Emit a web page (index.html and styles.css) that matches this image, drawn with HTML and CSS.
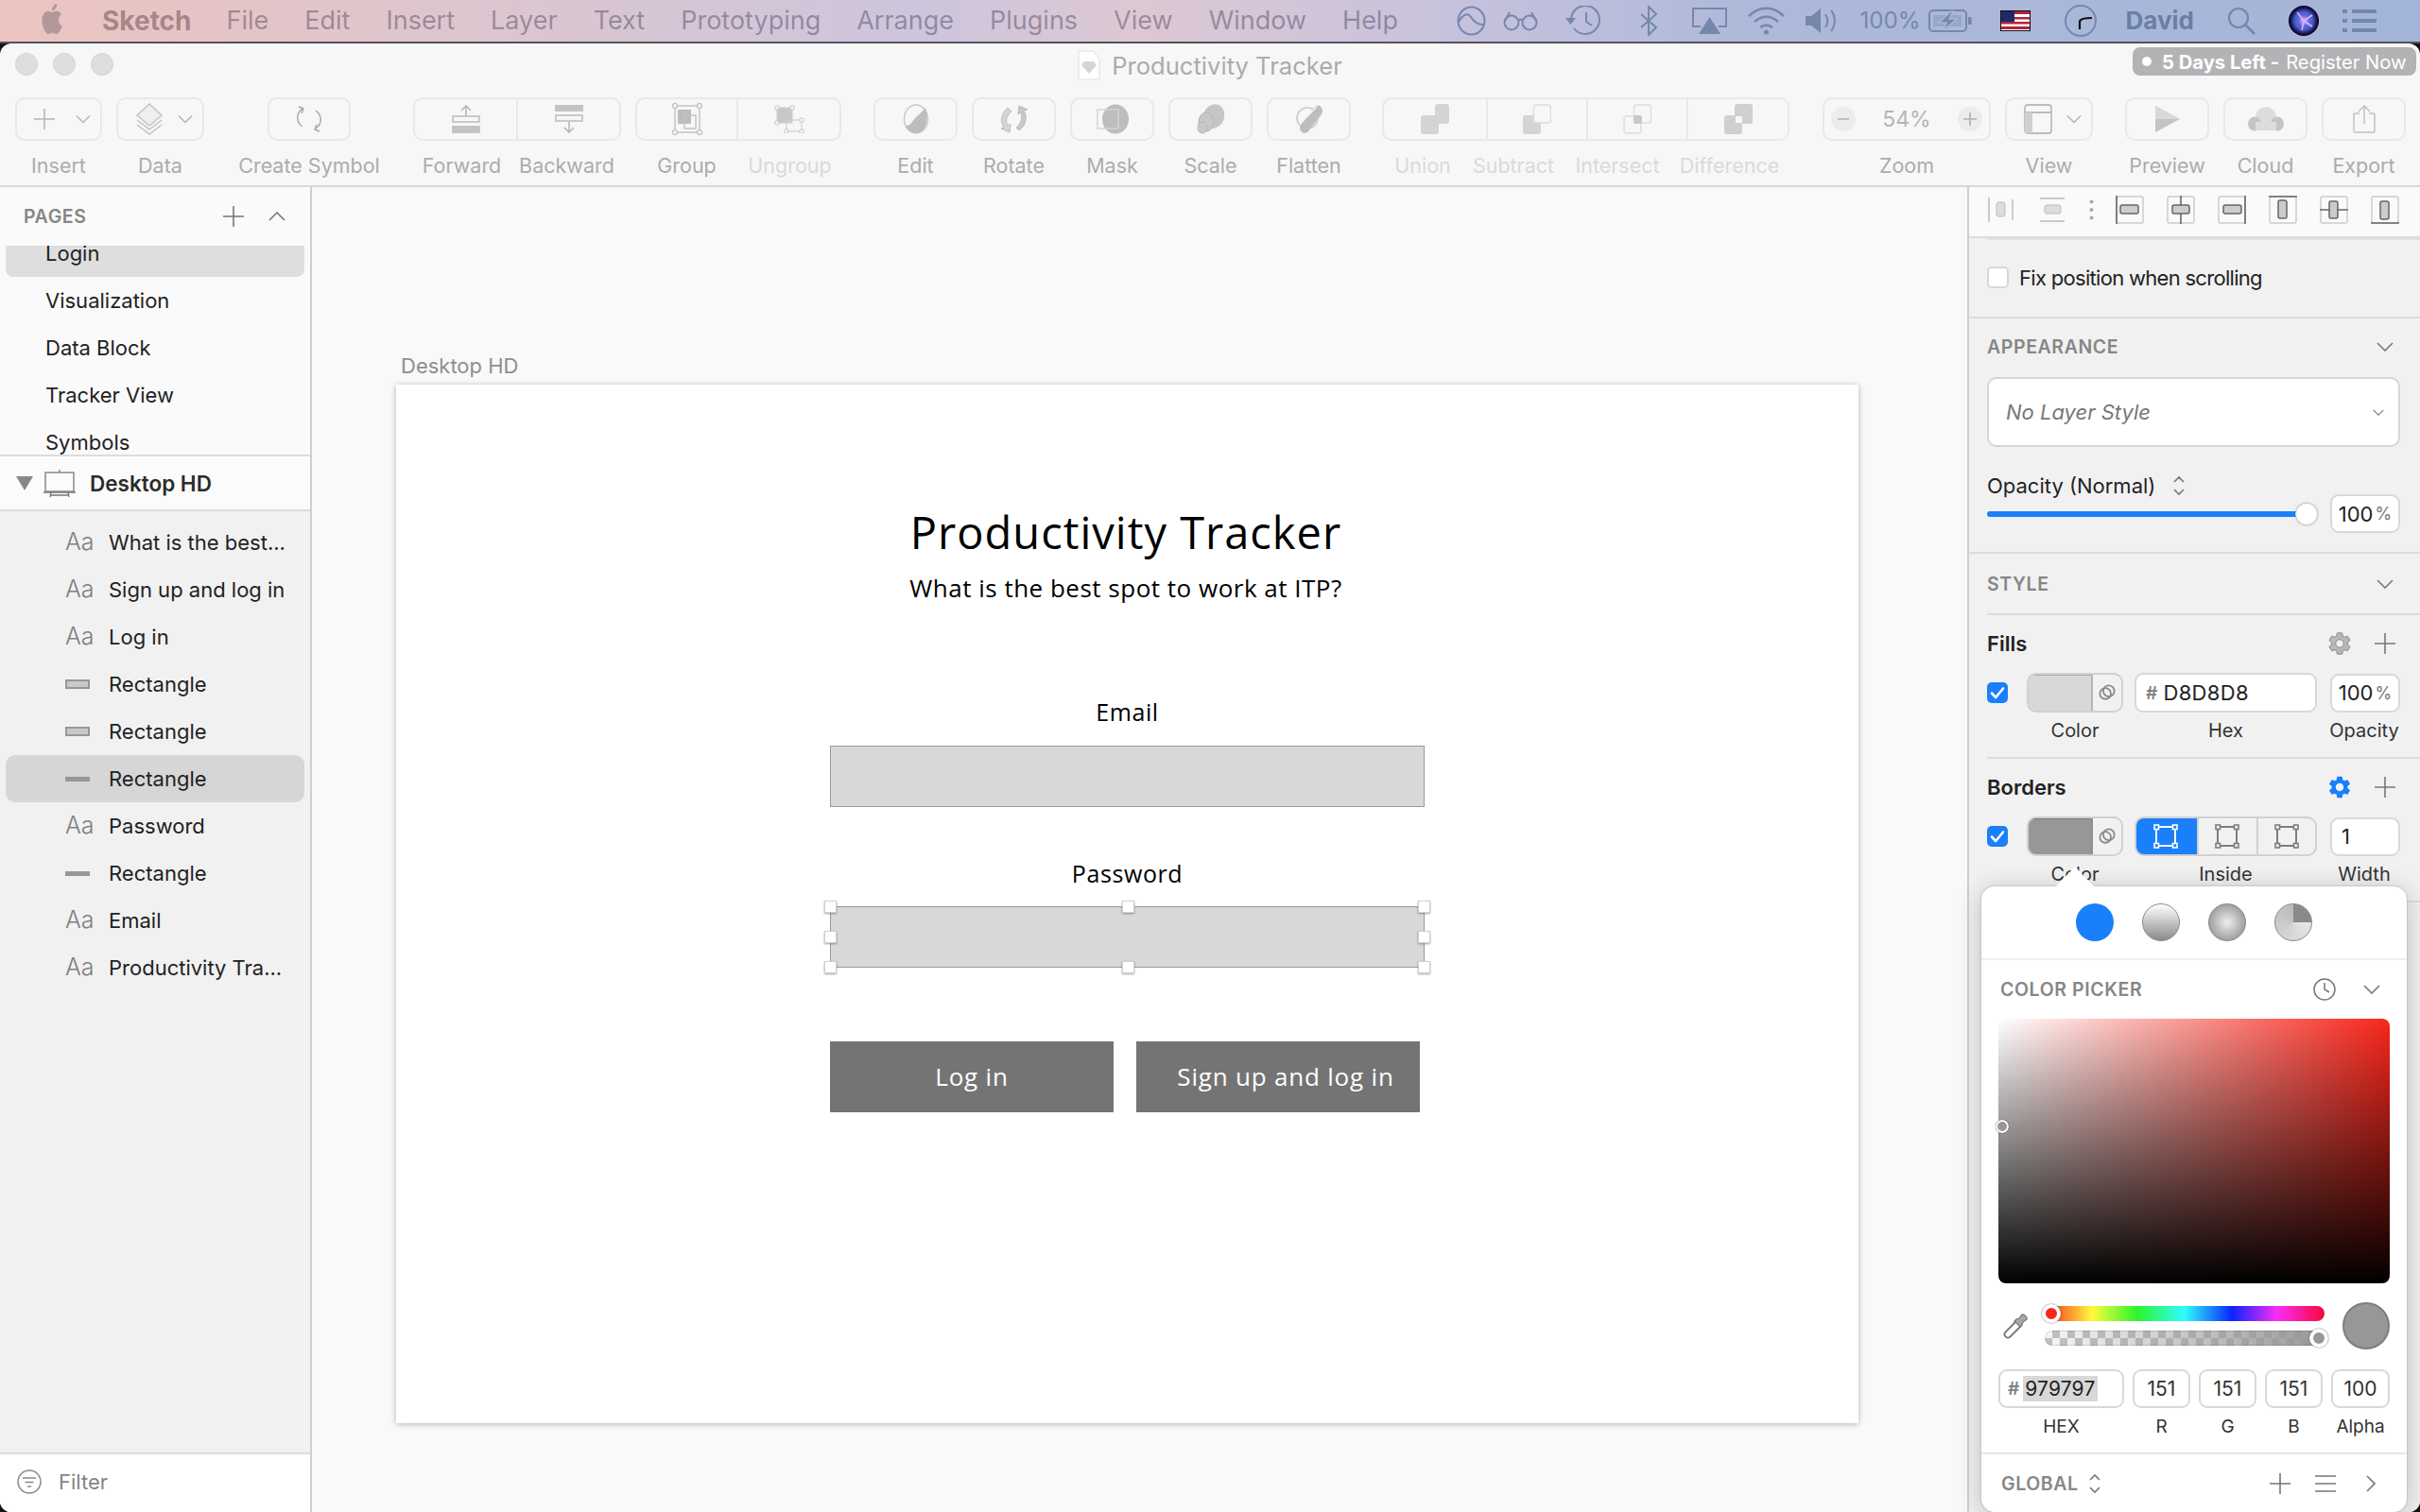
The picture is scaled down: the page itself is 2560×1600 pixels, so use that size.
FILE: index.html
```html
<!DOCTYPE html>
<html lang="en">
<head>
<meta charset="utf-8">
<title>Productivity Tracker</title>
<link rel="stylesheet" href="styles.css">
</head>
<body>
<svg class="defs" width="0" height="0" aria-hidden="true">
  <symbol id="plus" viewBox="0 0 22 22"><path d="M11 0v22M0 11h22" fill="none" stroke="currentColor" stroke-width="1.6"/></symbol>
  <symbol id="chev" viewBox="0 0 18 10"><path d="M1 1l8 8 8-8" fill="none" stroke="currentColor" stroke-width="1.6"/></symbol>
  <symbol id="gear" viewBox="0 0 24 24"><path d="M19.14 12.94c.04-.3.06-.61.06-.94 0-.32-.02-.64-.07-.94l2.03-1.58c.18-.14.23-.41.12-.61l-1.92-3.32c-.12-.22-.37-.29-.59-.22l-2.39.96c-.5-.38-1.03-.7-1.62-.94l-.36-2.54c-.04-.24-.24-.41-.48-.41h-3.84c-.24 0-.43.17-.47.41l-.36 2.54c-.59.24-1.13.57-1.62.94l-2.39-.96c-.22-.08-.47 0-.59.22L2.74 8.87c-.12.21-.08.47.12.61l2.03 1.58c-.05.3-.09.63-.09.94s.02.64.07.94l-2.03 1.58c-.18.14-.23.41-.12.61l1.92 3.32c.12.22.37.29.59.22l2.39-.96c.5.38 1.03.7 1.62.94l.36 2.54c.05.24.24.41.48.41h3.84c.24 0 .44-.17.47-.41l.36-2.54c.59-.24 1.13-.56 1.62-.94l2.39.96c.22.08.47 0 .59-.22l1.92-3.32c.12-.22.07-.47-.12-.61l-2.01-1.58zM12 15.6c-1.98 0-3.6-1.62-3.6-3.6s1.62-3.6 3.6-3.6 3.6 1.62 3.6 3.6-1.62 3.6-3.6 3.6z"/></symbol>
  <symbol id="link" viewBox="0 0 20 20"><g fill="none" stroke="#8a8a8a" stroke-width="2"><circle cx="8" cy="11" r="6.5"/><circle cx="12" cy="8" r="6.5"/></g></symbol>
  <symbol id="check" viewBox="0 0 22 22"><path d="M5 11.5l4.2 4.5L17 6.5" fill="none" stroke="#fff" stroke-width="2.6" stroke-linecap="round" stroke-linejoin="round"/></symbol>
  <symbol id="stepper" viewBox="0 0 14 22"><path d="M2 7l5-5 5 5M2 15l5 5 5-5" fill="none" stroke="#777" stroke-width="1.6"/></symbol>
  <symbol id="corners" viewBox="0 0 26 26"><path d="M3 3h20v20H3z" fill="none" stroke="currentColor" stroke-width="2"/><g fill="var(--h,#f1f1f1)" stroke="currentColor" stroke-width="1.6"><rect x="1" y="1" width="4.5" height="4.5"/><rect x="20.5" y="1" width="4.5" height="4.5"/><rect x="1" y="20.5" width="4.5" height="4.5"/><rect x="20.5" y="20.5" width="4.5" height="4.5"/></g></symbol>
</svg>

<header class="menubar">
  <svg class="apple" width="26" height="32" viewBox="0 0 24 24" preserveAspectRatio="none"><path d="M12.152 6.896c-.948 0-2.415-1.078-3.96-1.04-2.04.027-3.91 1.183-4.961 3.014-2.117 3.675-.546 9.103 1.519 12.09 1.013 1.454 2.208 3.09 3.792 3.039 1.52-.065 2.09-.987 3.935-.987 1.831 0 2.35.987 3.96.948 1.637-.026 2.676-1.48 3.676-2.948 1.156-1.688 1.636-3.325 1.662-3.415-.039-.013-3.182-1.221-3.22-4.857-.026-3.04 2.48-4.494 2.597-4.559-1.429-2.09-3.623-2.324-4.39-2.376-2-.156-3.675 1.09-4.61 1.09zM15.53 3.83c.843-1.012 1.4-2.427 1.245-3.83-1.207.052-2.662.805-3.532 1.818-.78.896-1.454 2.338-1.273 3.714 1.338.104 2.715-.688 3.559-1.701"/></svg>
  <nav class="menus">
    <span class="app">Sketch</span><span>File</span><span>Edit</span><span>Insert</span><span>Layer</span><span>Text</span><span>Prototyping</span><span>Arrange</span><span>Plugins</span><span>View</span><span>Window</span><span>Help</span>
  </nav>
  <div class="status">
    <svg width="31" height="32" viewBox="0 0 31 32"><g fill="none" stroke="currentColor" stroke-width="2"><ellipse cx="15.5" cy="16" rx="14" ry="14.5"/><path d="M2 17c4-7 8-9 11-7s6 11 16 10"/></g></svg>
    <svg class="ml-18" width="37" height="22" viewBox="0 0 37 22"><g fill="none" stroke="currentColor" stroke-width="2"><circle cx="9" cy="13" r="7.5"/><circle cx="28" cy="13" r="7.5"/><path d="M16 11c1.500-2 3.500-2 5 0M2 11L7 2M35 11L30 2"/></g></svg>
    <svg class="ml-29" width="38" height="32" viewBox="0 0 38 32"><g fill="none" stroke="currentColor" stroke-width="2"><path d="M6 15a15 15 0 1 1 3 9"/><path d="M22 7v10l6 4"/></g><path d="M0 13h11l-5.500 7z" fill="currentColor"/></svg>
    <svg class="ml-40" width="21" height="32" viewBox="0 0 21 32"><path d="M2 9l16 14-8 8V1l8 8L2 23" fill="none" stroke="currentColor" stroke-width="2"/></svg>
    <svg class="ml-35" width="37" height="28" viewBox="0 0 37 28"><path d="M9 20H1V1h35v19h-8" fill="none" stroke="currentColor" stroke-width="2"/><path d="M18.500 10L30 28H7z" fill="currentColor"/></svg>
    <svg class="ml-21" width="41" height="30" viewBox="0 0 41 30"><g fill="none" stroke="currentColor" stroke-width="2.600"><path d="M2 10c11-11 26-11 37 0M8 16c8-7 17-7 25 0M14 22c4-3 9-3 13 0"/></g><circle cx="20.500" cy="27" r="2.500" fill="currentColor"/></svg>
    <svg class="ml-21" width="32" height="26" viewBox="0 0 32 26"><path d="M0 8h6l10-8v26L6 18H0z" fill="currentColor"/><path d="M21 6c3 4 3 10 0 14M27 2c5 6 5 16 0 22" fill="none" stroke="currentColor" stroke-width="2"/></svg>
    <span class="ml-25 pct">100%</span>
    <svg class="ml-8" width="46" height="24" viewBox="0 0 46 24"><rect x="1" y="1" width="39" height="22" rx="4" fill="none" stroke="currentColor" stroke-width="2"/><path d="M42 8h3c1 0 1 8 0 8h-3z" fill="currentColor"/><path d="M5 6h30v12H5z" fill="currentColor" opacity=".35"/><path d="M24 2L11 14h8l-3 8 14-12h-8l4-8z" fill="currentColor" stroke="#a8b5d6" stroke-width="1.500"/></svg>
    <svg class="ml-30" width="32" height="22" viewBox="0 0 32 22"><rect width="32" height="22" fill="#111"/><rect x="1" y="1" width="30" height="20" fill="#fff"/><path d="M1 1h30v3H1zM1 7h30v2.500H1zM1 12h30v2.500H1zM1 17h30v3H1z" fill="#b2223a"/><rect x="1" y="1" width="14" height="11" fill="#1f2a6a"/></svg>
    <svg class="ml-36" width="34" height="34" viewBox="0 0 34 34"><circle cx="17" cy="17" r="16" fill="none" stroke="currentColor" stroke-width="2"/><path d="M16 26V18c0-2 3-4 13-4" fill="none" stroke="#111" stroke-width="2.200"/></svg>
    <span class="ml-31 user">David</span>
    <svg class="ml-35" width="30" height="30" viewBox="0 0 30 30"><circle cx="12" cy="12" r="10" fill="none" stroke="currentColor" stroke-width="2.200"/><path d="M19 19l10 10" stroke="currentColor" stroke-width="2.600"/></svg>
    <svg class="ml-35 siri" width="32" height="32" viewBox="0 0 32 32"><defs><radialGradient id="siriG"><stop offset="0" stop-color="#9fd8f0"/><stop offset=".35" stop-color="#7a5ce0"/><stop offset=".6" stop-color="#3566c0"/><stop offset=".85" stop-color="#241060"/><stop offset="1" stop-color="#020208"/></radialGradient></defs><circle cx="16" cy="16" r="16" fill="url(#siriG)"/><path d="M16 16L9 7M16 16l9-6M16 16l-2 10M16 16l9 6" stroke="#e0b0ff" stroke-width="1.600"/></svg>
    <svg class="ml-25" width="36" height="26" viewBox="0 0 36 26"><path d="M0 1h5v4H0zM10 1h26v4H10zM0 11h5v4H0zM10 11h26v4H10zM0 21h5v4H0zM10 21h26v4H10z" fill="currentColor"/></svg>
  </div>
</header>

<div class="window">
  <div class="titlebar">
    <div class="lights"><i></i><i></i><i></i></div>
    <div class="doc">
      <svg width="24" height="32" viewBox="0 0 24 32"><path d="M1 1h15l7 8v22H1z" fill="#fff" stroke="#ddd"/><path d="M7 12h10l3 4-8 9-8-9z" fill="#d5d5d5"/></svg>
      <span>Productivity Tracker</span>
    </div>
    <div class="badge"><i></i><b>5 Days Left -</b> Register Now</div>
  </div>

  <div class="toolbar">
    <div class="tool w92">
      <div class="btn between"><svg class="tb-i" width="22" height="24"><use href="#plus"/></svg><svg class="tb-c" width="16" height="10"><use href="#chev"/></svg></div>
      <span class="lbl">Insert</span>
    </div>
    <div class="tool w93">
      <div class="btn between">
        <svg width="30" height="34" viewBox="0 0 30 34"><path d="M15 1l13 12-13 11L2 13z" fill="#efefef" stroke="#c4c4c4" stroke-width="1.500"/><path d="M2 18l13 10 13-10M2 23l13 10 13-10" fill="none" stroke="#c4c4c4" stroke-width="1.500"/></svg>
        <svg class="tb-c" width="16" height="10"><use href="#chev"/></svg>
      </div>
      <span class="lbl">Data</span>
    </div>
    <div class="tool w88 gap-67">
      <div class="btn"><svg width="30" height="28" viewBox="0 0 30 28"><g fill="none" stroke="#a8a8a8" stroke-width="1.500"><path d="M8 22C1 17 1 8 8 3M4 1l5 2-2 5M22 5c7 5 7 14 0 19M26 27l-5-2 2-5"/></g></svg></div>
      <span class="lbl">Create Symbol</span>
    </div>

    <div class="seg gap-66">
      <div class="tool w111">
        <div class="btn first"><svg width="30" height="30" viewBox="0 0 30 30"><path d="M15 16V1M10 6l5-5 5 5" fill="none" stroke="#b5b5b5" stroke-width="1.500"/><rect x="1" y="12" width="28" height="6" fill="#f7f7f7" stroke="#bbb" stroke-width="1.500"/><rect x="0" y="22" width="30" height="8" rx="1" fill="#c4c4c4"/></svg></div>
        <span class="lbl sh8">Forward</span>
      </div>
      <div class="tool w109">
        <div class="btn last"><svg width="30" height="30" viewBox="0 0 30 30"><rect x="0" y="0" width="30" height="7" rx="1" fill="#c4c4c4"/><rect x="1" y="11" width="28" height="6" fill="#f7f7f7" stroke="#bbb" stroke-width="1.500"/><path d="M15 18v11M10 24l5 5 5-5" fill="none" stroke="#b5b5b5" stroke-width="1.500"/></svg></div>
        <span class="lbl sh6">Backward</span>
      </div>
    </div>
    <div class="seg">
      <div class="tool w109">
        <div class="btn first"><svg width="34" height="34" viewBox="0 0 34 34"><path d="M4 3h26v28H4z" fill="none" stroke="#c4c4c4" stroke-width="1.500"/><rect x="7" y="7" width="14" height="15" fill="#bdbdbd"/><rect x="14" y="13" width="12" height="14" fill="none" stroke="#c4c4c4" stroke-width="1.500"/><g fill="#f7f7f7" stroke="#bbb" stroke-width="1.200"><circle cx="4" cy="3" r="2.500"/><circle cx="30" cy="3" r="2.500"/><circle cx="4" cy="31" r="2.500"/><circle cx="30" cy="31" r="2.500"/></g></svg></div>
        <span class="lbl">Group</span>
      </div>
      <div class="tool w109">
        <div class="btn last"><svg width="32" height="30" viewBox="0 0 32 30"><rect x="3" y="3" width="16" height="16" fill="#c8c8c8" stroke="#ccc"/><rect x="13" y="16" width="16" height="12" fill="none" stroke="#d0d0d0" stroke-width="1.200"/><g fill="#f7f7f7" stroke="#ccc" stroke-width="1.100"><circle cx="3" cy="3" r="2.200"/><circle cx="19" cy="3" r="2.200"/><circle cx="3" cy="19" r="2.200"/><circle cx="29" cy="16" r="2.200"/><circle cx="13" cy="28" r="2.200"/><circle cx="29" cy="28" r="2.200"/></g></svg></div>
        <span class="lbl dim">Ungroup</span>
      </div>
    </div>

    <div class="tool w89 gap-33">
      <div class="btn"><svg width="28" height="32" viewBox="0 0 28 32"><ellipse cx="14" cy="16" rx="12.500" ry="15" fill="none" stroke="#c8c8c8" stroke-width="1.500"/><path d="M24 4c3 6 3 27-10 27-5 0-9-4-11-8 6 0 7-5 11-9 4-3 7-7 10-10z" fill="#bdbdbd"/></svg></div>
      <span class="lbl">Edit</span>
    </div>
    <div class="tool w89">
      <div class="btn"><svg width="32" height="30" viewBox="0 0 32 30"><path d="M9 3C2 9 1 18 5 24l-3 1 9 4 1-9-3 2C6 17 8 11 13 7z" fill="#d6d6d6" stroke="#bbb"/><path d="M21 27c8-6 9-15 5-21l4-1-9-4-1 9 3-2c2 6 0 12-5 16z" fill="#c8c8c8" stroke="#bbb"/></svg></div>
      <span class="lbl">Rotate</span>
    </div>
    <div class="tool w89">
      <div class="btn"><svg width="34" height="32" viewBox="0 0 34 32"><ellipse cx="20" cy="16" rx="14" ry="15.500" fill="#bdbdbd"/><rect x="1" y="6" width="22" height="20" fill="none" stroke="#d4d4d4" stroke-width="1.500"/></svg></div>
      <span class="lbl">Mask</span>
    </div>
    <div class="tool w89">
      <div class="btn"><svg width="32" height="32" viewBox="0 0 32 32"><ellipse cx="19" cy="13" rx="11" ry="13" fill="#c6c6c6" transform="rotate(20 19 13)"/><ellipse cx="11" cy="19" rx="8" ry="10" fill="#c8c8c8" stroke="#b5b5b5"/><ellipse cx="7" cy="25" rx="5" ry="6" fill="#c8c8c8" stroke="#b5b5b5"/></svg></div>
      <span class="lbl">Scale</span>
    </div>
    <div class="tool w89">
      <div class="btn"><svg width="30" height="32" viewBox="0 0 30 32"><circle cx="13" cy="15" r="11" fill="none" stroke="#c8c8c8" stroke-width="1.500"/><path d="M21 3c5-4 10 2 7 8L14 29c-5 5-11-1-8-7z" fill="#bdbdbd"/><path d="M5 21L23 3" stroke="#f7f7f7" stroke-width="1.500"/></svg></div>
      <span class="lbl">Flatten</span>
    </div>

    <div class="seg gap-33b">
      <div class="tool w112">
        <div class="btn first"><svg width="30" height="32" viewBox="0 0 30 32"><path d="M15 3a3 3 0 0 1 3-3h9a3 3 0 0 1 3 3v15a3 3 0 0 1-3 3h-8v8a3 3 0 0 1-3 3H3a3 3 0 0 1-3-3V15a3 3 0 0 1 3-3h12z" fill="#d4d4d4"/></svg></div>
        <span class="lbl dim sh26">Union</span>
      </div>
      <div class="tool w106">
        <div class="btn mid"><svg width="30" height="32" viewBox="0 0 30 32"><path d="M0 15a3 3 0 0 1 3-3h16v17a3 3 0 0 1-3 3H3a3 3 0 0 1-3-3z" fill="#d4d4d4"/><rect x="11.500" y="1" width="18" height="19" rx="3" fill="#f7f7f7" stroke="#ddd" stroke-width="1.500"/></svg></div>
        <span class="lbl dim sh52">Subtract</span>
      </div>
      <div class="tool w106">
        <div class="btn mid"><svg width="30" height="32" viewBox="0 0 30 32"><rect x="1" y="13" width="18" height="18" rx="3" fill="none" stroke="#ddd" stroke-width="1.500"/><rect x="11.500" y="1" width="18" height="19" rx="3" fill="none" stroke="#ddd" stroke-width="1.500"/><rect x="11" y="12" width="9" height="9" rx="2" fill="#c8c8c8"/></svg></div>
        <span class="lbl dim sh44">Intersect</span>
      </div>
      <div class="tool w107">
        <div class="btn last"><svg width="30" height="32" viewBox="0 0 30 32"><path fill-rule="evenodd" d="M3 12h8V3a3 3 0 0 1 3-3h13a3 3 0 0 1 3 3v15a3 3 0 0 1-3 3h-8v8a3 3 0 0 1-3 3H3a3 3 0 0 1-3-3V15a3 3 0 0 1 3-3zm9 1v7h7v-7z" fill="#d0d0d0"/></svg></div>
        <span class="lbl dim sh20">Difference</span>
      </div>
    </div>

    <div class="tool w178 gap-35">
      <div class="btn zoom">
        <span class="zc"><svg width="12" height="12" viewBox="0 0 12 12"><path d="M0 6h12" stroke="#b0b0b0" stroke-width="1.600"/></svg></span>
        <span class="zv">54%</span>
        <span class="zc"><svg width="14" height="14" viewBox="0 0 14 14"><path d="M7 0v14M0 7h14" stroke="#b0b0b0" stroke-width="1.600"/></svg></span>
      </div>
      <span class="lbl">Zoom</span>
    </div>
    <div class="tool w93">
      <div class="btn between"><svg width="30" height="32" viewBox="0 0 30 32"><rect x="1" y="1" width="28" height="30" rx="3" fill="none" stroke="#bbb" stroke-width="1.800"/><path d="M1 9h28" stroke="#bbb" stroke-width="1.800"/><path d="M1 9h8v22H4a3 3 0 0 1-3-3z" fill="#d0d0d0"/></svg><svg class="tb-c" width="16" height="10"><use href="#chev"/></svg></div>
      <span class="lbl">View</span>
    </div>

    <div class="tool w89 gap-33c">
      <div class="btn"><svg width="26" height="28" viewBox="0 0 26 28"><path d="M0 0l26 14L0 28z" fill="#c4c4c4"/><path d="M0 0l26 14-14 0L0 14z" fill="#d8d8d8"/></svg></div>
      <span class="lbl">Preview</span>
    </div>
    <div class="tool w89">
      <div class="btn"><svg width="38" height="26" viewBox="0 0 38 26"><ellipse cx="19" cy="12" rx="11" ry="12" fill="#dcdcdc"/><ellipse cx="7" cy="18" rx="7" ry="7.500" fill="#c4c4c4"/><ellipse cx="31" cy="18" rx="7" ry="7.500" fill="#c4c4c4"/><path d="M8 25h22v-9H8z" fill="#dcdcdc"/></svg></div>
      <span class="lbl">Cloud</span>
    </div>
    <div class="tool w89">
      <div class="btn"><svg width="24" height="30" viewBox="0 0 24 30"><path d="M7 9H3a2 2 0 0 0-2 2v16a2 2 0 0 0 2 2h18a2 2 0 0 0 2-2V11a2 2 0 0 0-2-2h-4" fill="none" stroke="#c0c0c0" stroke-width="1.500"/><path d="M12 20V1M6 7l6-6 6 6" fill="none" stroke="#c0c0c0" stroke-width="1.500"/></svg></div>
      <span class="lbl">Export</span>
    </div>
  </div>

  <div class="main">
    <aside class="sidebar">
      <div class="pages-head">
        <span class="caps">PAGES</span>
        <svg class="ink" width="22" height="22"><use href="#plus"/></svg>
        <svg class="ink up" width="18" height="10"><use href="#chev"/></svg>
      </div>
      <div class="pages">
        <div class="pages-inner">
          <div class="page sel">Login</div>
          <div class="page">Visualization</div>
          <div class="page">Data Block</div>
          <div class="page">Tracker View</div>
          <div class="page">Symbols</div>
        </div>
      </div>
      <div class="artboard-row">
        <svg width="18" height="15" viewBox="0 0 18 15"><path d="M0 0h18L9 15z" fill="#888"/></svg>
        <svg width="34" height="30" viewBox="0 0 34 30"><g fill="none" stroke="#777" stroke-width="1.300"><rect x="2" y="3" width="30" height="20"/><path d="M0 24h34M7 29l1-5M27 29l-1-5M7 27h20M17 0v3"/></g></svg>
        <strong>Desktop HD</strong>
      </div>
      <div class="layers">
        <div class="layer"><span class="aa">Aa</span><span>What is the best...</span></div>
        <div class="layer"><span class="aa">Aa</span><span>Sign up and log in</span></div>
        <div class="layer"><span class="aa">Aa</span><span>Log in</span></div>
        <div class="layer"><span class="ly"><i class="rect"></i></span><span>Rectangle</span></div>
        <div class="layer"><span class="ly"><i class="rect"></i></span><span>Rectangle</span></div>
        <div class="layer sel"><span class="ly"><i class="bar"></i></span><span>Rectangle</span></div>
        <div class="layer"><span class="aa">Aa</span><span>Password</span></div>
        <div class="layer"><span class="ly"><i class="bar"></i></span><span>Rectangle</span></div>
        <div class="layer"><span class="aa">Aa</span><span>Email</span></div>
        <div class="layer"><span class="aa">Aa</span><span>Productivity Tra...</span></div>
      </div>
      <div class="filter">
        <svg width="26" height="26" viewBox="0 0 26 26"><circle cx="13" cy="13" r="12" fill="none" stroke="#888" stroke-width="1.500"/><path d="M6 9h14M8.500 13.500h9M11 18h4" stroke="#888" stroke-width="1.600"/></svg>
        <span>Filter</span>
      </div>
    </aside>

    <section class="canvas">
      <div class="ab-label">Desktop HD</div>
      <div class="ab">
        <div class="ab-col">
          <h1 class="ab-title">Productivity Tracker</h1>
          <p class="ab-sub">What is the best spot to work at ITP?</p>
        </div>
        <div class="form">
          <div class="f-label">Email</div>
          <div class="field"></div>
          <div class="f-label second">Password</div>
          <div class="field picked">
            <i class="h tl"></i><i class="h tc"></i><i class="h tr"></i>
            <i class="h ml"></i><i class="h mr"></i>
            <i class="h bl"></i><i class="h bc"></i><i class="h br"></i>
          </div>
          <div class="ab-btns">
            <div class="ab-btn">Log in</div>
            <div class="ab-btn off">Sign up and log in</div>
          </div>
        </div>
      </div>
    </section>

    <aside class="insp">
      <div class="align">
        <svg width="27" height="26" viewBox="0 0 27 26"><path d="M1 0v26M26 2v22" stroke="#bbb" stroke-width="1.500"/><rect x="9" y="5" width="9" height="15" rx="2" fill="#ddd" stroke="#bbb"/></svg>
        <svg class="a2" width="27" height="26" viewBox="0 0 27 26"><path d="M0 1h26M0 25h26" stroke="#bbb" stroke-width="1.500"/><rect x="5" y="8" width="17" height="9" rx="2" fill="#ddd" stroke="#bbb"/></svg>
        <svg class="a3" width="5" height="22" viewBox="0 0 5 22"><circle cx="2.500" cy="2.500" r="2" fill="#aaa"/><circle cx="2.500" cy="11" r="2" fill="#aaa"/><circle cx="2.500" cy="19.500" r="2" fill="#aaa"/></svg>
        <span class="a-group">
          <svg width="30" height="30" viewBox="0 0 30 30"><rect x="1" y="1" width="28" height="28" rx="2" fill="none" stroke="#ccc" stroke-width="1.500"/><path d="M1 0v30" stroke="#666" stroke-width="1.600"/><rect x="5" y="10" width="19" height="9" rx="2" fill="#ccc" stroke="#666" stroke-width="1.500"/></svg>
          <svg width="30" height="30" viewBox="0 0 30 30"><rect x="1" y="1" width="28" height="28" rx="2" fill="none" stroke="#ccc" stroke-width="1.500"/><path d="M15 0v30" stroke="#666" stroke-width="1.600"/><rect x="6" y="10" width="18" height="9" rx="2" fill="#ccc" stroke="#666" stroke-width="1.500"/></svg>
          <svg width="30" height="30" viewBox="0 0 30 30"><rect x="1" y="1" width="28" height="28" rx="2" fill="none" stroke="#ccc" stroke-width="1.500"/><path d="M29 0v30" stroke="#666" stroke-width="1.600"/><rect x="6" y="10" width="19" height="9" rx="2" fill="#ccc" stroke="#666" stroke-width="1.500"/></svg>
          <svg width="30" height="30" viewBox="0 0 30 30"><rect x="1" y="1" width="28" height="28" rx="2" fill="none" stroke="#ccc" stroke-width="1.500"/><path d="M0 1h30" stroke="#666" stroke-width="1.600"/><rect x="10" y="5" width="9" height="19" rx="2" fill="#ccc" stroke="#666" stroke-width="1.500"/></svg>
          <svg width="30" height="30" viewBox="0 0 30 30"><rect x="1" y="1" width="28" height="28" rx="2" fill="none" stroke="#ccc" stroke-width="1.500"/><path d="M0 15h30" stroke="#666" stroke-width="1.600"/><rect x="10" y="6" width="9" height="18" rx="2" fill="#ccc" stroke="#666" stroke-width="1.500"/></svg>
          <svg width="30" height="30" viewBox="0 0 30 30"><rect x="1" y="1" width="28" height="28" rx="2" fill="none" stroke="#ccc" stroke-width="1.500"/><path d="M0 29h30" stroke="#666" stroke-width="1.600"/><rect x="10" y="6" width="9" height="19" rx="2" fill="#ccc" stroke="#666" stroke-width="1.500"/></svg>
        </span>
      </div>
      <div class="fix">
        <span class="cb-empty"></span><span>Fix position when scrolling</span>
      </div>

      <div class="sect">
        <div class="sect-head"><span class="caps">APPEARANCE</span><svg class="ink" width="18" height="10"><use href="#chev"/></svg></div>
        <div class="select"><em>No Layer Style</em><svg class="ink" width="12" height="7"><use href="#chev"/></svg></div>
        <div class="opacity">
          <div class="op-left">
            <div class="op-label">Opacity (Normal)<svg class="op-step" width="14" height="22"><use href="#stepper"/></svg></div>
            <div class="slider"><i class="thumb"></i></div>
          </div>
          <div class="inp pct-inp">100<small>%</small></div>
        </div>
      </div>

      <div class="style-head"><span class="caps">STYLE</span><svg class="ink" width="18" height="10"><use href="#chev"/></svg></div>

      <div class="block">
        <div class="block-head"><strong>Fills</strong><svg class="gear grey" width="28" height="28"><use href="#gear"/></svg><svg class="ink" width="22" height="22"><use href="#plus"/></svg></div>
        <div class="prow">
          <span class="cb"><svg width="22" height="22"><use href="#check"/></svg></span>
          <div class="well"><i class="sw light"></i><span class="well-link"><svg width="18" height="18"><use href="#link"/></svg></span></div>
          <div class="inp hex"><span class="hash">#</span>D8D8D8</div>
          <div class="inp pct-inp">100<small>%</small></div>
        </div>
        <div class="prow labels"><span></span><span>Color</span><span>Hex</span><span>Opacity</span></div>
      </div>

      <div class="block">
        <div class="block-head"><strong>Borders</strong><svg class="gear blue" width="28" height="28"><use href="#gear"/></svg><svg class="ink" width="22" height="22"><use href="#plus"/></svg></div>
        <div class="prow">
          <span class="cb"><svg width="22" height="22"><use href="#check"/></svg></span>
          <div class="well"><i class="sw dark"></i><span class="well-link"><svg width="18" height="18"><use href="#link"/></svg></span></div>
          <div class="posseg">
            <span class="on"><svg width="26" height="26"><use href="#corners"/></svg></span>
            <span><svg width="26" height="26"><use href="#corners"/></svg></span>
            <span><svg width="26" height="26"><use href="#corners"/></svg></span>
          </div>
          <div class="inp pct-inp left">1</div>
        </div>
        <div class="prow labels"><span></span><span>Color</span><span>Inside</span><span>Width</span></div>
      </div>

      <div class="pop">
        <i class="pop-arrow"></i>
        <div class="kinds"><i class="k solid"></i><i class="k lin"></i><i class="k rad"></i><i class="k ang"></i></div>
        <div class="pk-head">
          <span class="caps">COLOR PICKER</span>
          <svg class="ink" width="24" height="24" viewBox="0 0 24 24"><g fill="none" stroke="currentColor" stroke-width="1.500"><circle cx="12" cy="12" r="11"/><path d="M12 5v7l5 3"/></g></svg>
          <svg class="ink pk-ch" width="18" height="10"><use href="#chev"/></svg>
        </div>
        <div class="grad"><i class="grad-h"></i></div>
        <div class="pk-sliders">
          <svg class="drop" width="28" height="28" viewBox="0 0 28 28"><path d="M16 7L3 20c-2 3 2 7 5 5L21 12" fill="#fff" stroke="#777" stroke-width="1.800"/><path d="M13 8l2-2 3-1 3-4c2-1 6 3 5 5l-4 3-1 3-2 2z" fill="#a8a8a8" stroke="#777" stroke-width="1.200"/></svg>
          <div class="bars">
            <div class="hue"><i class="hue-t"></i></div>
            <div class="alpha"><i class="alpha-t"></i></div>
          </div>
          <i class="now"></i>
        </div>
        <div class="pk-inputs">
          <div class="inp i-hex"><span class="hash">#</span><mark>979797</mark></div>
          <div class="inp">151</div><div class="inp">151</div><div class="inp">151</div><div class="inp i-a">100</div>
        </div>
        <div class="pk-labels"><span class="i-hex">HEX</span><span>R</span><span>G</span><span>B</span><span class="i-a">Alpha</span></div>
        <div class="pk-foot">
          <span class="caps">GLOBAL</span>
          <svg class="gl-step" width="14" height="22"><use href="#stepper"/></svg>
          <svg class="ink ft-plus" width="22" height="22"><use href="#plus"/></svg>
          <svg class="ink ft-menu" width="22" height="20" viewBox="0 0 22 20"><path d="M0 2h22M0 10h22M0 18h22" stroke="currentColor" stroke-width="1.600"/></svg>
          <svg class="ink ft-next" width="10" height="18" viewBox="0 0 10 18"><path d="M1 1l8 8-8 8" fill="none" stroke="currentColor" stroke-width="1.600"/></svg>
        </div>
      </div>
    </aside>
  </div>
</div>
</body>
</html>
```

FILE: styles.css
```css
* { box-sizing: border-box; }
html, body { margin: 0; padding: 0; }
body {
  width: 2560px; height: 1600px; overflow: hidden;
  display: flex; flex-direction: column;
  background: #17120f;
  font-family: Inter, "Noto Sans", sans-serif;
  font-size: 22px; color: #222;
}
.defs { position: absolute; }
i { display: block; font-style: normal; }
svg { display: block; flex: none; }

/* menu bar */
.menubar {
  height: 46px; flex: none; display: flex; align-items: center;
  padding: 0 46px 1px 42px;
  border-bottom: 2px solid #55525e;
  background: linear-gradient(90deg, #ecc4c0 0%, #dcc6cf 20%, #cdc5dc 38%, #ddc8d4 47%, #c7c2dc 60%, #afb9da 72%, #a3b5d8 100%);
}
.apple { fill: #b3989a; margin-top: -4px; }
.menus {
  display: flex; gap: 38px; margin-left: 40px;
  font-size: 27px; color: rgba(45, 35, 65, .38);
}
.menus .app { font-weight: 700; font-size: 28px; color: rgba(60, 30, 40, .4); margin-right: -1px; }
.status {
  margin-left: auto; display: flex; align-items: center;
  color: #7488ac;
}
.status .pct { font-size: 24.2px; }
.status .user { font-size: 26px; font-weight: 700; color: #6a7ea4; }
.ml-8 { margin-left: 8px; }
.ml-18 { margin-left: 18px; }
.ml-21 { margin-left: 21px; }
.ml-25 { margin-left: 25px; }
.ml-29 { margin-left: 29px; }
.ml-30 { margin-left: 30px; }
.ml-31 { margin-left: 31px; }
.ml-35 { margin-left: 35px; }
.ml-36 { margin-left: 36px; }
.ml-40 { margin-left: 40px; }

/* window */
.window {
  flex: 1; min-height: 0; display: flex; flex-direction: column;
  border-radius: 12px; overflow: hidden; background: #f7f7f7;
}
.titlebar {
  height: 46px; flex: none; position: relative;
  display: flex; align-items: center; justify-content: center;
}
.lights {
  position: absolute; left: 16px; top: 10px;
  display: flex; gap: 16px;
}
.lights i { width: 24px; height: 24px; border-radius: 50%; background: #dedede; border: 1px solid #d2d2d2; }
.doc { display: flex; align-items: center; gap: 12px; font-size: 25.6px; color: #ababab; }
.badge {
  position: absolute; right: 4px; top: 4px;
  height: 30px; width: 300px; padding-left: 10px;
  display: flex; align-items: center; gap: 7px;
  background: #b3b3b6; color: #fff; font-size: 20.2px;
  border-radius: 8px;
}
.badge i { width: 10px; height: 10px; border-radius: 50%; background: #fff; margin-right: 4px; }
.badge b { font-weight: 700; }

/* toolbar */
.toolbar {
  flex: none; height: 106px; display: flex; align-items: flex-start; gap: 15px;
  padding: 11px 0 0 16px;
  border-bottom: 2px solid #d8d8d8;
}
.tool { display: flex; flex-direction: column; align-items: center; flex: none; }
.btn {
  width: 100%; height: 46px; display: flex; align-items: center; justify-content: center;
  border: 2px solid #e8e8e8; border-radius: 10px; background: #f7f7f7;
}
.btn.between { justify-content: space-between; padding: 0 10px 0 18px; color: #b5b5b5; }
.btn.first { border-radius: 10px 0 0 10px; }
.btn.mid { border-radius: 0; border-left: 0; }
.btn.last { border-radius: 0 10px 10px 0; border-left: 0; }
.btn svg { color: #b5b5b5; }
.lbl { margin-top: 13px; height: 26px; line-height: 26px; white-space: nowrap; font-size: 21.5px; color: #acacac; }
.lbl.dim { color: #dadada; }
.sh6 { margin-right: 6px; } .sh8 { margin-right: 8px; } .sh20 { margin-right: 20px; }
.sh26 { margin-right: 26px; } .sh44 { margin-right: 44px; } .sh52 { margin-right: 52px; }
.seg { display: flex; flex: none; }
.w88 { width: 88px; } .w89 { width: 89px; } .w92 { width: 92px; } .w93 { width: 93px; }
.w106 { width: 106px; } .w107 { width: 107px; } .w109 { width: 109px; }
.w111 { width: 111px; } .w112 { width: 112px; } .w178 { width: 178px; }
.gap-33 { margin-left: 19px; } .gap-33b { margin-left: 18px; } .gap-33c { margin-left: 19px; }
.gap-35 { margin-left: 20px; } .gap-66 { margin-left: 51px; } .gap-67 { margin-left: 52px; }
.btn.zoom { justify-content: space-between; padding: 0 7px; font-size: 23px; color: #b5b5b5; }
.zc { width: 26px; height: 26px; border-radius: 50%; background: #ececec; display: flex; align-items: center; justify-content: center; }

/* main */
.main { flex: 1; min-height: 0; display: flex; }
.caps { font-size: 19.5px; font-weight: 600; letter-spacing: .6px; color: #868686; }
.ink { color: #777; }

/* left */
.sidebar {
  width: 330px; flex: none; display: flex; flex-direction: column;
  background: #fafafa; border-right: 2px solid #cfcfcf;
}
.pages-head {
  height: 62px; flex: none; display: flex; align-items: center;
  padding: 0 26px 0 25px;
}
.pages-head .caps { margin-right: auto; }
.pages-head .up { transform: rotate(180deg); margin-left: 26px; }
.pages { height: 221px; flex: none; overflow: hidden; }
.pages-inner { margin-top: -17px; padding: 0 6px; }
.page { height: 50px; line-height: 50px; padding-left: 42px; }
.page.sel { background: #dedede; border-radius: 8px; }
.artboard-row {
  height: 60px; flex: none; display: flex; align-items: center; gap: 11px;
  padding: 1px 0 0 17px; background: #fbfbfb;
  border-top: 2px solid #dcdcdc; border-bottom: 2px solid #dcdcdc;
}
.artboard-row strong { margin-left: 4px; font-size: 22.5px; font-weight: 600; color: #2b2b2b; }
.layers { flex: 1; min-height: 0; background: #f1f1f1; padding: 8px 6px 0; }
.layer { height: 50px; display: flex; align-items: center; padding-left: 63px; }
.layer.sel { background: #d6d6d6; border-radius: 10px; }
.aa, .ly { width: 46px; flex: none; }
.aa { font-size: 25px; font-weight: 300; color: #808080; margin-top: -3px; }
.ly i { width: 26px; background: #979797; }
.ly .rect { height: 10px; background: #c8c8c8; border: 2px solid #979797; }
.ly .bar { height: 5px; }
.filter {
  height: 63px; flex: none; display: flex; align-items: center; gap: 18px;
  padding: 0 0 3px 18px; background: #fff; border-top: 2px solid #dcdcdc; color: #858585;
}

/* canvas */
.canvas { flex: 1; min-width: 0; background: #f9f9f9; padding: 178px 0 0 89px; }
.ab-label { height: 22px; line-height: 22px; margin-left: 5px; font-size: 22px; color: #8e8e8e; }
.ab {
  margin-top: 9px; width: 1547px; height: 1099px;
  background: #fff; box-shadow: 0 1px 6px rgba(0,0,0,.28);
  padding-top: 124px;
  font-family: "Open Sans", "Noto Sans", sans-serif; color: #000;
}
.ab-col { text-align: center; margin-left: -3px; }
.ab-title { margin: 0; height: 64px; line-height: 64px; font-size: 47px; font-weight: 400; letter-spacing: 1px; }
.ab-sub { margin: 7px 0 0; height: 40px; line-height: 40px; font-size: 26px; letter-spacing: .5px; }
.form { width: 629px; margin: 0 0 0 459px; }
.f-label { margin-top: 93px; height: 36px; line-height: 36px; text-align: center; font-size: 25px; letter-spacing: .6px; }
.f-label.second { margin-top: 52px; }
.field { margin-top: 18px; height: 65px; background: #d8d8d8; border: 1px solid #9a9a9a; }
.field.picked { margin-top: 17px; position: relative; }
.h {
  position: absolute; width: 13px; height: 13px; background: #fff;
  border: 1px solid #d0d0d0; box-shadow: 0 1px 2px rgba(0,0,0,.35);
}
.tl { left: -7px; top: -7px; } .tc { left: 308px; top: -7px; } .tr { right: -7px; top: -7px; }
.ml { left: -7px; top: 25px; } .mr { right: -7px; top: 25px; }
.bl { left: -7px; bottom: -7px; } .bc { left: 308px; bottom: -7px; } .br { right: -7px; bottom: -7px; }
.ab-btns { display: flex; gap: 24px; margin-top: 78px; }
.ab-btn {
  width: 300px; height: 75px; line-height: 75px; text-align: center;
  background: #747474; color: #fff; font-size: 26px; letter-spacing: .8px;
}
.ab-btn.off { padding-left: 16px; }

/* inspector */
.insp {
  width: 479px; flex: none; position: relative;
  background: #f1f1f1; border-left: 2px solid #cfcfcf;
}
.align {
  height: 54px; display: flex; align-items: center;
  padding: 0 21px 4px 20px; background: #fafafa; border-bottom: 2px solid #ddd;
}
.a2 { margin-left: 28px; }
.a3 { margin-left: 25px; }
.a-group { display: flex; gap: 24px; margin-left: 23px; }
.fix {
  margin-left: 19px; height: 83px; display: flex; align-items: center; gap: 11px;
  padding-bottom: 2px; border-top: 2px solid #e2e2e2; letter-spacing: -.7px;
}
.cb-empty { width: 23px; height: 23px; background: #fff; border: 2px solid #d8d8d8; border-radius: 5px; }
.sect { padding: 0 21px 20px 19px; border-top: 2px solid #dcdcdc; border-bottom: 2px solid #dcdcdc; }
.sect-head { height: 60px; display: flex; align-items: center; justify-content: space-between; padding-right: 7px; }
.select {
  margin-top: 2px; height: 74px; display: flex; align-items: center; justify-content: space-between;
  padding: 0 15px 0 18px; background: #fff; border: 2px solid #d6d6d6; border-radius: 10px;
}
.select em { color: #777; }
.opacity { margin-top: 26px; height: 65px; display: flex; justify-content: space-between; align-items: flex-end; }
.op-left { width: 351px; height: 65px; }
.op-label { height: 30px; line-height: 30px; display: flex; align-items: center; }
.op-step { margin-left: 18px; }
.slider { margin-top: 12px; height: 6px; width: 338px; background: #1a7ffb; border-radius: 3px; position: relative; }
.thumb {
  position: absolute; right: -12px; top: -9px; width: 24px; height: 24px; border-radius: 50%;
  background: #fff; border: 1px solid #ccc; box-shadow: 0 0 2px rgba(0,0,0,.25);
}
.inp {
  height: 41px; display: flex; align-items: center; justify-content: center;
  background: #fff; border: 2px solid #d8d8d8; border-radius: 9px;
}
.pct-inp { width: 74px; justify-self: end; }
.pct-inp small { font-size: 18px; color: #777; margin-left: 2px; }
.pct-inp.left { justify-content: flex-start; padding-left: 10px; }
.style-head {
  margin-left: 19px; height: 65px; display: flex; align-items: center; justify-content: space-between;
  padding-right: 28px; border-bottom: 2px solid #dcdcdc;
}
.block { margin-left: 19px; padding-right: 21px; border-bottom: 2px solid #dcdcdc; height: 152px; }
.block-head { height: 61px; display: flex; align-items: center; padding: 0 5px 2px 0; }
.block-head strong { margin-right: auto; font-weight: 600; font-size: 22px; }
.gear { margin-right: 23px; }
.gear.grey { fill: #b8b8b8; stroke: #777; stroke-width: .7px; }
.gear.blue { fill: #1a7ffb; }
.prow { display: grid; grid-template-columns: 30px 102px 193px 76px; column-gap: 12px; align-items: center; }
.prow.labels { text-align: center; font-size: 20px; color: #333; align-items: end; height: 31px; }
.cb { width: 22px; height: 22px; background: #1a7ffb; border-radius: 5px; }
.well { height: 42px; display: flex; border: 2px solid #d0d0d0; border-radius: 10px; overflow: hidden; }
.sw { width: 68px; border-right: 2px solid #8f8f8f; }
.sw.light { background: #d8d8d8; border-right-color: #b5b5b5; box-shadow: inset 0 1px 0 #aaa; }
.sw.dark { background: #979797; box-shadow: inset 0 1px 0 #777; }
.well-link { flex: 1; display: flex; align-items: center; justify-content: center; }
.hex { justify-content: flex-start; padding-left: 10px; gap: 6px; letter-spacing: .3px; height: 42px; }
.hash { color: #808080; font-weight: 600; font-size: 19px; }
.posseg { height: 42px; display: flex; border: 2px solid #d0d0d0; border-radius: 10px; overflow: hidden; color: #7d7d7d; }
.posseg span { flex: 1; display: flex; align-items: center; justify-content: center; border-left: 2px solid #d0d0d0; }
.posseg span:first-child { border-left: 0; }
.posseg .on { background: #1a7ffb; color: #fff; flex: none; width: 66px; --h: #1a7ffb; margin: -2px 0 -2px -2px; }

/* popover */
.pop {
  position: absolute; left: 13px; top: 740px; width: 450px; height: 662px;
  background: #fff; border-radius: 14px;
  box-shadow: 0 0 2px rgba(0,0,0,.3), 0 4px 28px rgba(0,0,0,.22);
}
.pop-arrow {
  position: absolute; left: 78px; top: -21px; width: 42px; height: 22px;
  background: #fff; clip-path: polygon(50% 0, 100% 100%, 0 100%);
}
.kinds { height: 78px; display: flex; justify-content: center; align-items: center; gap: 30px; border-bottom: 2px solid #eee; }
.k { width: 40px; height: 40px; border-radius: 50%; border: 1px solid #8a8a8a; }
.k.solid { background: #1a7ffb; border: 0; }
.k.lin { background: linear-gradient(#fff, #8a8a8a); }
.k.rad { background: radial-gradient(#eee, #808080); }
.k.ang { background: conic-gradient(#8a8a8a 0 25%, #e6e6e6 25%, #bcbcbc 100%); }
.pk-head { height: 62px; display: flex; align-items: center; padding: 0 28px 0 20px; }
.pk-head .caps { margin-right: auto; }
.pk-ch { margin-left: 29px; }
.grad {
  margin: 0 18px; height: 280px; position: relative; border-radius: 8px;
  background: linear-gradient(180deg, transparent, #000), linear-gradient(90deg, #fff, #f7261b);
}
.grad-h {
  position: absolute; left: -3px; top: 107px; width: 14px; height: 14px; border-radius: 50%;
  background: #979797; border: 2px solid #fff; box-shadow: 0 0 1px #000;
}
.pk-sliders { height: 91px; display: flex; padding-left: 18px; position: relative; }
.drop { margin: 32px 17px 0 4px; }
.bars { width: 300px; padding-top: 24px; }
.hue, .alpha { height: 16px; border-radius: 8px; position: relative; }
.hue {
  width: 296px;
  background: linear-gradient(90deg, #f7261b 0%, #fdfb3c 17%, #2cf52c 33%, #2dfdfd 50%, #0b24fb 67%, #fb2cf8 83%, #f7083c 100%);
}
.alpha {
  margin-top: 10px;
  background: linear-gradient(90deg, rgba(151,151,151,0), #979797), conic-gradient(#c0c0c0 25%, #f6f6f6 0 50%, #c0c0c0 0 75%, #f6f6f6 0) 0 0 / 16px 16px;
  box-shadow: inset 0 0 0 1px rgba(0,0,0,.12);
}
.hue-t, .alpha-t {
  position: absolute; width: 20px; height: 20px; border-radius: 50%; top: -2px;
  border: 4px solid #fff; box-shadow: 0 0 2px rgba(0,0,0,.6);
}
.hue-t { left: -3px; background: #f7261b; }
.alpha-t { right: 0; background: #979797; }
.now {
  position: absolute; left: 382px; top: 20px; width: 50px; height: 50px; border-radius: 50%;
  background: #979797; border: 2px solid #7d7d7d;
}
.pk-inputs { display: flex; gap: 9px; padding-left: 18px; }
.pk-inputs .inp { width: 61px; font-size: 21px; color: #333; }
.pk-inputs .i-hex { width: 133px; justify-content: flex-start; padding-left: 8px; gap: 4px; }
.pk-inputs .i-a { width: 62px; }
mark { background: #d8d8d8; color: #222; padding: 1px 2px; letter-spacing: .2px; }
.pk-labels { display: flex; gap: 9px; padding-left: 18px; height: 47px; font-size: 19px; color: #333; }
.pk-labels span { width: 61px; text-align: center; padding-top: 8px; }
.pk-labels .i-hex { width: 133px; }
.pk-labels .i-a { width: 62px; }
.pk-foot { height: 63px; display: flex; align-items: center; padding-left: 21px; border-top: 2px solid #e6e6e6; }
.gl-step { margin-left: 10px; }
.ft-plus { margin-left: auto; }
.ft-menu { margin-left: 26px; }
.ft-next { margin: 0 33px 0 32px; }
```
